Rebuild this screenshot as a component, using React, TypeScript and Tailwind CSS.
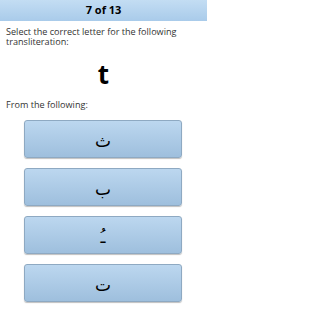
export default function App() {
  const choices = ["\u062B", "\u0628", "\u0640\u064F", "\u062A"];

  return (
    <div className="w-[207px] h-[310px] bg-white overflow-hidden font-['Open_Sans','DejaVu_Sans',sans-serif] text-[#222]">
      {/* header */}
      <div className="h-[21px] flex items-center justify-center bg-gradient-to-b from-[#c3ddf3] to-[#a9cbea] text-[11px] font-bold text-black">
        7 of 13
      </div>

      <div className="px-[6px] pt-[5.5px] text-[9.1px] leading-[10px] text-[#333] whitespace-nowrap">
        Select the correct letter for the following
        <br />
        transliteration:
      </div>

      <div className="flex justify-center mt-[13.5px] text-[26px] leading-[28px] font-bold text-black">
        t
      </div>

      <div className="px-[6px] mt-[12px] text-[9.1px] leading-[10px] text-[#333]">
        From the following:
      </div>

      {/* choices */}
      <div className="flex flex-col gap-[10px] mt-[10px] px-[24px]">
        {choices.map((c, i) => (
          <button
            key={i}
            className="h-[38px] w-[158px] flex items-center justify-center pt-[3px] rounded-[3px] border border-[#8ea9c2] bg-gradient-to-b from-[#bcd7ef] to-[#9ebfdd] shadow-[0_1px_1px_rgba(0,0,0,0.25)] text-[17px] leading-[20px] text-black font-['DejaVu_Sans',sans-serif]"
          >
            {c}
          </button>
        ))}
      </div>
    </div>
  );
}
